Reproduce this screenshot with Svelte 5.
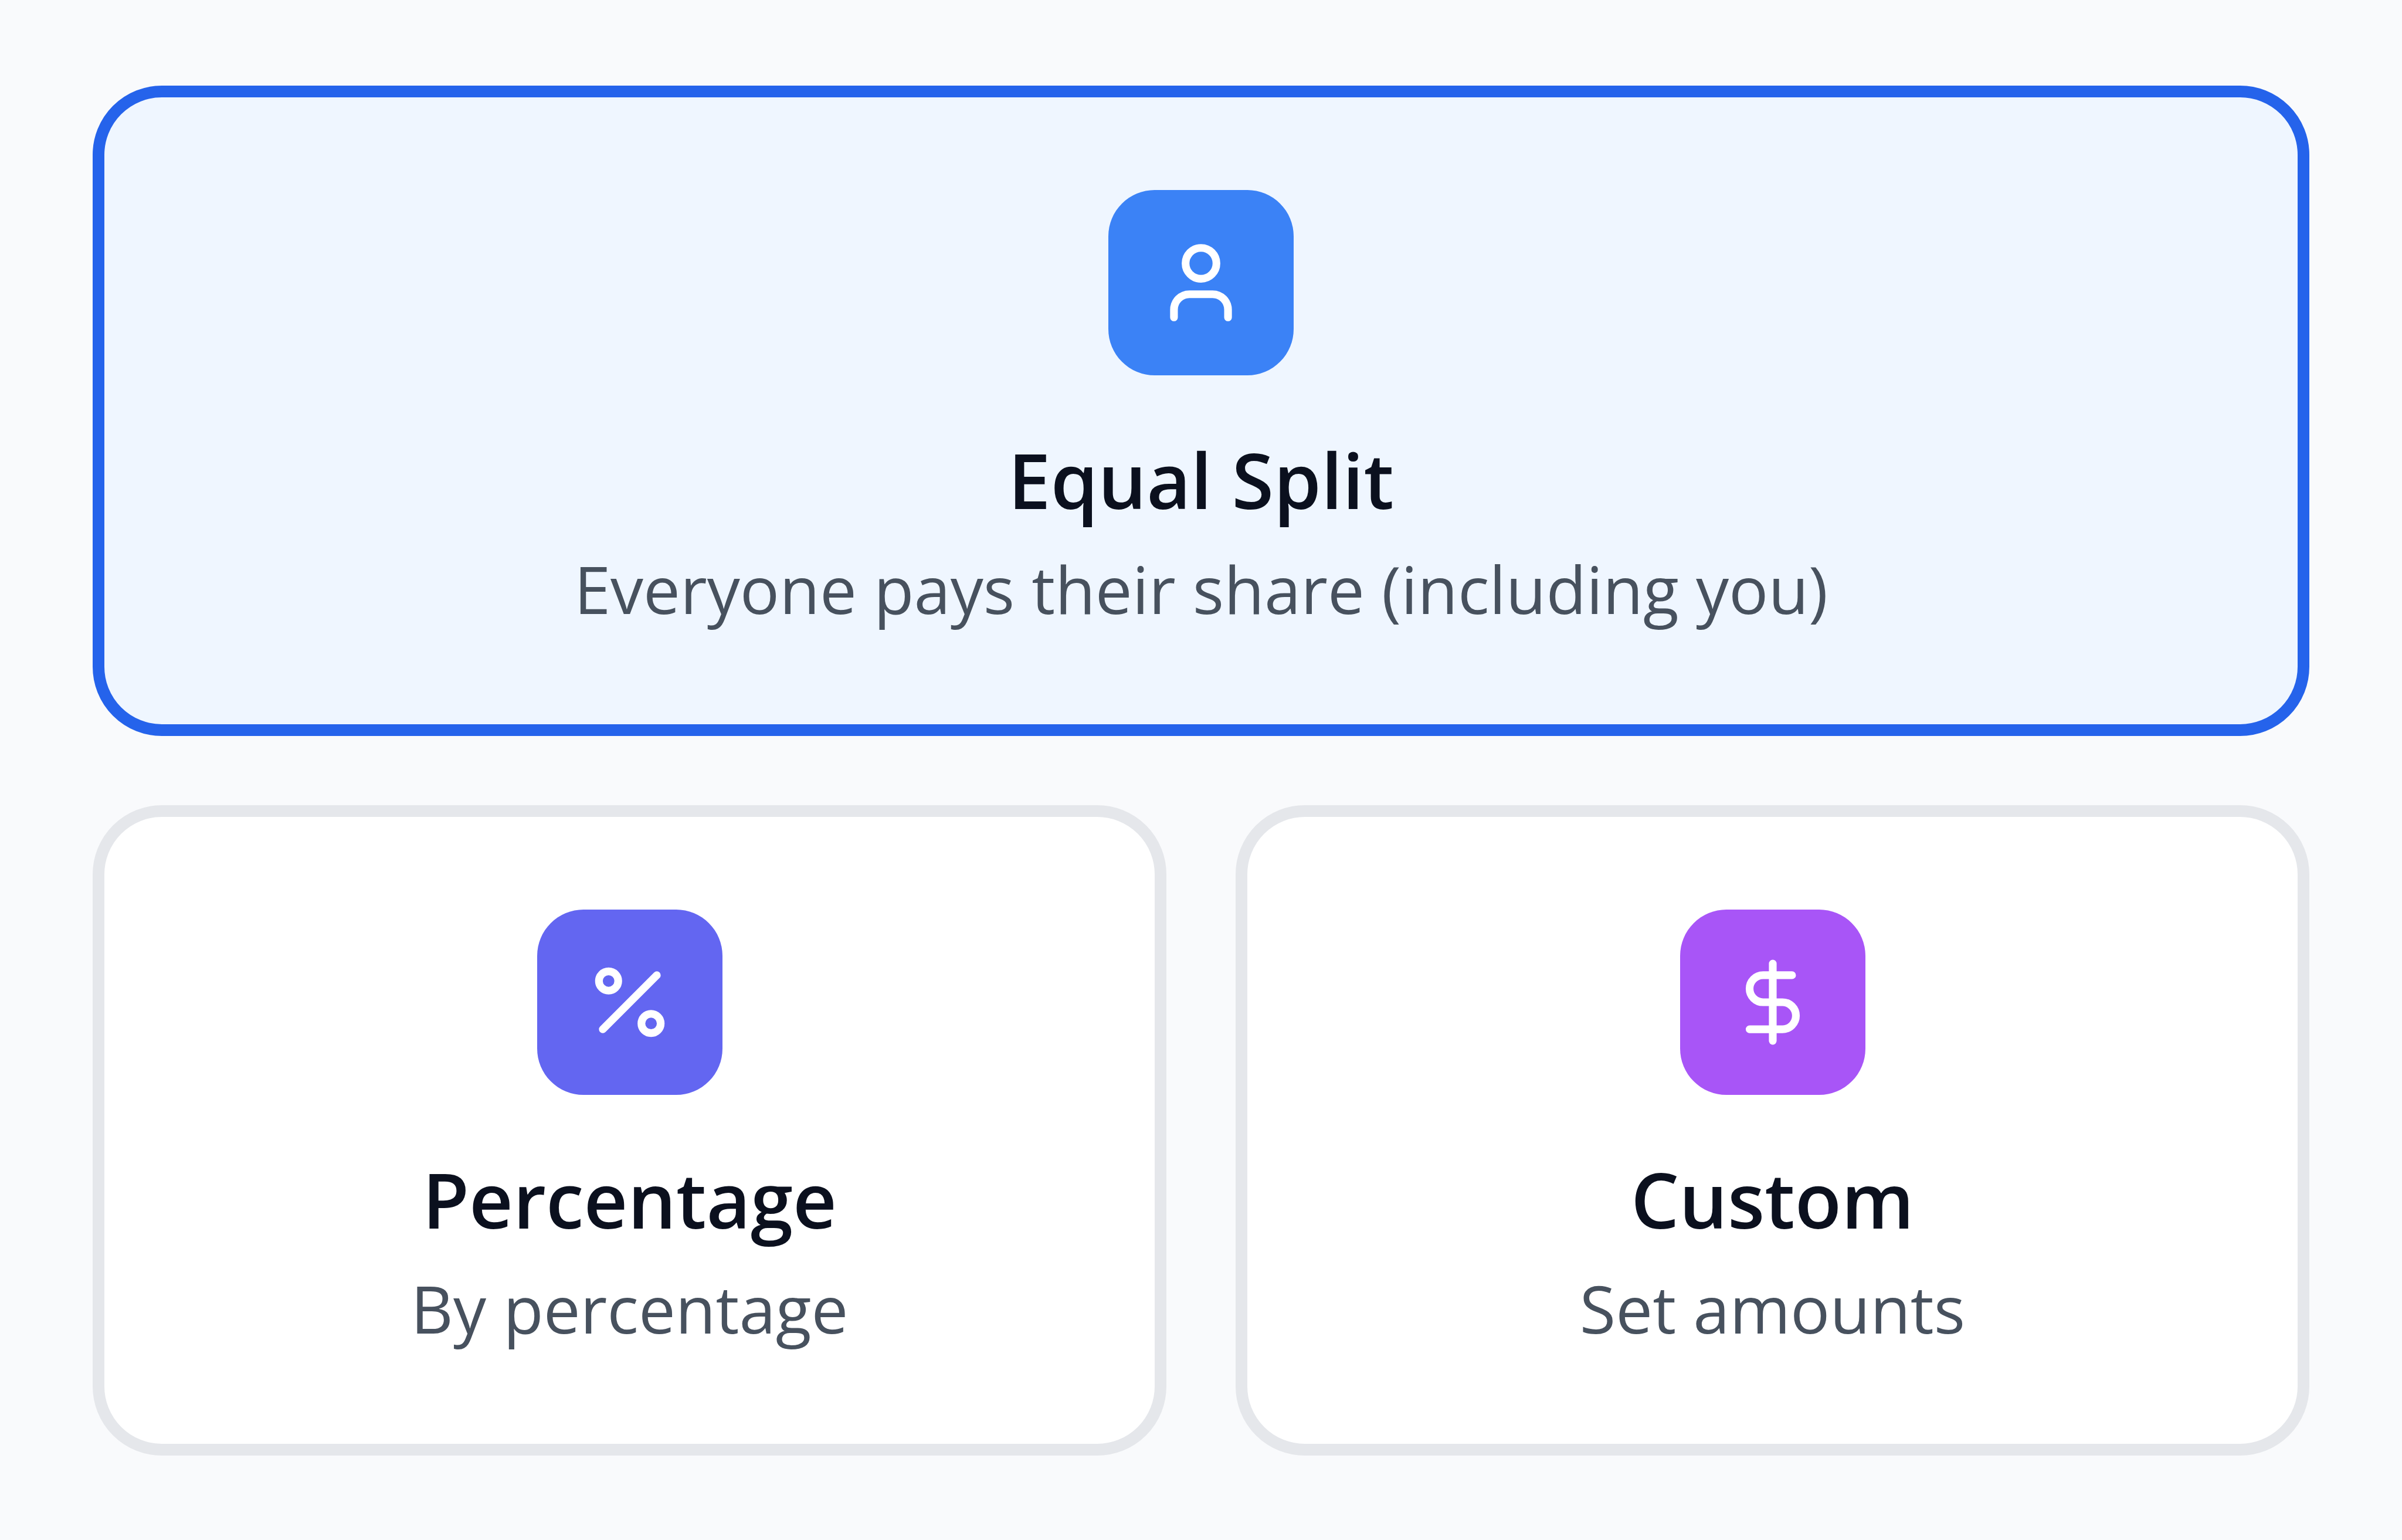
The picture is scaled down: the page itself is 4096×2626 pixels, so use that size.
<script>
  const options = [
    { id: 'equal', title: 'Equal Split', note: 'Everyone pays their share (including you)' },
    { id: 'percentage', title: 'Percentage', note: 'By percentage' },
    { id: 'custom', title: 'Custom', note: 'Set amounts' }
  ];
  let selected = $state('equal');
</script>

<main class="split-options">
  {#each options as option (option.id)}
    <button
      type="button"
      class="card {option.id}"
      class:selected={selected === option.id}
      aria-pressed={selected === option.id}
      onclick={() => (selected = option.id)}
    >
      <span class="badge">
        <svg viewBox="0 0 24 24" aria-hidden="true">
          {#if option.id === 'equal'}
            <path d="M19 21v-2a4 4 0 0 0-4-4H9a4 4 0 0 0-4 4v2" />
            <circle cx="12" cy="7" r="4" />
          {:else if option.id === 'percentage'}
            <line x1="19" y1="5" x2="5" y2="19" />
            <circle cx="6.5" cy="6.5" r="2.5" />
            <circle cx="17.5" cy="17.5" r="2.5" />
          {:else}
            <line x1="12" y1="2" x2="12" y2="22" />
            <path d="M17 5H9.5a3.5 3.5 0 0 0 0 7h5a3.5 3.5 0 0 1 0 7H6" />
          {/if}
        </svg>
      </span>
      <span class="title">{option.title}</span>
      <span class="note">{option.note}</span>
    </button>
  {/each}
</main>

<style>
  :global(body) {
    background: #f9fafc;
  }

  .split-options {
    display: grid;
    grid-template-columns: 1fr 1fr;
    gap: 118px;
    padding: 146px 158px;
    font-family: 'Segoe UI', 'Open Sans', 'Noto Sans', sans-serif;
  }

  .card {
    display: flex;
    flex-direction: column;
    align-items: center;
    margin: 0;
    padding: 158px 158px 149px;
    border: 20px solid #e5e7eb;
    border-radius: 118px;
    background: #ffffff;
    font-family: inherit;
    text-align: center;
    cursor: pointer;
  }

  .card.equal {
    grid-column: 1 / -1;
  }

  .card.selected {
    border-color: #2563eb;
    background: #eff6ff;
  }

  .badge {
    display: flex;
    align-items: center;
    justify-content: center;
    width: 316px;
    height: 316px;
    margin-bottom: 86px;
    border-radius: 79px;
    background: #3b82f6;
  }

  .percentage .badge {
    background: #6366f1;
  }

  .custom .badge {
    background: #a855f7;
  }

  svg {
    width: 158px;
    height: 158px;
    fill: none;
    stroke: #ffffff;
    stroke-width: 2;
    stroke-linecap: round;
    stroke-linejoin: round;
  }

  .title {
    margin-bottom: 12px;
    color: #0b101e;
    font-size: 130px;
    font-weight: 600;
    line-height: 184px;
  }

  .note {
    color: #47515e;
    font-size: 112px;
    font-weight: 400;
    line-height: 164px;
  }
</style>
